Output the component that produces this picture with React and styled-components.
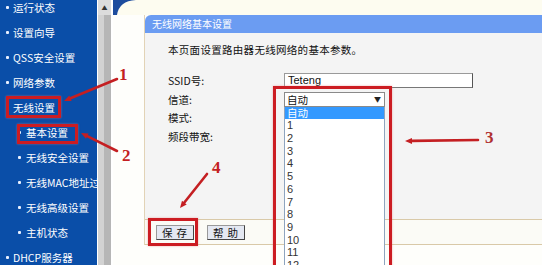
import React from "react";
import styled, { createGlobalStyle } from "styled-components";

const Global = createGlobalStyle`
  html, body { margin: 0; padding: 0; background: #ffffff; overflow: hidden; }
  body { font-family: "Noto Sans CJK SC", "DejaVu Sans", sans-serif; }
`;

const Page = styled.div`
  position: relative;
  width: 542px;
  height: 265px;
  display: flex;
  overflow: hidden;
  background: #fefefb;
`;

const Sidebar = styled.nav`
  width: 97px;
  flex: none;
  background: #0a4ea8;
  overflow: hidden;
`;

const MenuList = styled.ul`
  list-style: none;
  margin: -5px 0 0 0;
  padding: 0;
`;

const MenuItem = styled.li`
  height: 25px;
  display: flex;
  align-items: center;
  gap: ${(p) => (p.$sub ? "5px" : "4px")};
  padding-left: ${(p) => (p.$sub ? "18px" : "6px")};
  color: #ffffff;
  font-size: 10.5px;
  white-space: nowrap;
  &::before {
    content: "";
    width: 3px;
    height: 3px;
    border-radius: 1px;
    background: #e8f0ff;
    flex: none;
  }
`;

const Scrollbar = styled.div`
  width: 13px;
  flex: none;
  border-left: 1px solid #ffffff;
  border-right: 2px solid #ffffff;
  background: linear-gradient(90deg, #d2d2d2 0 45%, #b6b6b6 45% 100%);
  display: flex;
  flex-direction: column;
`;

const ScrollBtn = styled.div`
  height: 15px;
  background: #dcdcdc;
  color: #333;
  font-size: 6px;
  display: flex;
  justify-content: center;
  padding-top: 3px;
  box-sizing: border-box;
`;

const Main = styled.main`
  flex: 1;
  display: flex;
  flex-direction: column;
`;

const TopStrip = styled.div`
  height: 15px;
  display: flex;
  background: #fdfcf0;
`;

const Corner = styled.svg`
  display: block;
`;

const Panel = styled.section`
  margin-left: 31px;
  border-left: 1px solid #e2d3b6;
  display: flex;
  flex-direction: column;
`;

const TitleBar = styled.header`
  height: 18px;
  line-height: 18px;
  background: #6b9cf2;
  border-top-left-radius: 6px;
  color: #ffffff;
  font-size: 10px;
  padding-left: 7px;
`;

const Body = styled.div`
  height: 186px;
  box-sizing: border-box;
  background: #f4f4f4;
  padding: 10px 0 0 23px;
  color: #111;
  font-size: 10.5px;
`;

const Intro = styled.p`
  margin: 0;
  line-height: 14px;
  letter-spacing: 0.3px;
`;

const Form = styled.div`
  margin-top: 16px;
  display: grid;
  grid-template-columns: 116px auto;
  grid-auto-rows: 15px;
  row-gap: 3.7px;
  align-items: center;
`;

const Label = styled.span`
  line-height: 15px;
`;

const TextInput = styled.div`
  width: 189px;
  height: 15px;
  box-sizing: border-box;
  background: #ffffff;
  border: 1px solid #9a9a9a;
  border-right-color: #555;
  border-bottom-color: #777;
  font-family: "Liberation Sans", sans-serif;
  font-size: 11px;
  line-height: 13px;
  padding-left: 3px;
`;

const SelectWrap = styled.div`
  position: relative;
  width: 101px;
  height: 15px;
`;

const SelectBox = styled.div`
  height: 15px;
  box-sizing: border-box;
  background: #ffffff;
  border: 1px solid #8a8a8a;
  display: flex;
  justify-content: space-between;
  align-items: center;
  padding: 0 3px 0 2px;
  font-size: 10.5px;
`;

const Caret = styled.span`
  font-size: 7px;
  color: #222;
`;

const DropList = styled.ul`
  position: absolute;
  top: 15px;
  left: 0;
  width: 101px;
  box-sizing: border-box;
  margin: 0;
  padding: 0;
  list-style: none;
  background: #ffffff;
  border: 1px solid #8ea4bf;
  border-top: none;
  z-index: 2;
`;

const DropItem = styled.li`
  height: 12.7px;
  line-height: 12.7px;
  padding-left: 2px;
  font-family: ${(p) => (p.$num ? '"Liberation Sans", sans-serif' : "inherit")};
  font-size: ${(p) => (p.$num ? "11px" : "10.5px")};
  background: ${(p) => (p.$active ? "#3399ff" : "transparent")};
  color: ${(p) => (p.$active ? "#ffffff" : "#333")};
`;

const ButtonRow = styled.div`
  height: 24px;
  border-top: 1px solid #d9c9a8;
  border-bottom: 1px solid #d9c9a8;
  background: #fbfbf6;
  display: flex;
  align-items: center;
  gap: 13px;
  padding-left: 11px;
`;

const Button = styled.button`
  height: 15px;
  padding: 0 2px 0 5px;
  margin: 0;
  border: 1px solid #444;
  border-top-color: #999;
  border-left-color: #999;
  background: #e4e8f2;
  font-family: "Noto Sans CJK SC", sans-serif;
  font-size: 10.5px;
  line-height: 13px;
  letter-spacing: 4px;
  white-space: nowrap;
  color: #111;
`;

const Box = styled.div`
  position: absolute;
  left: ${(p) => p.$x}px;
  top: ${(p) => p.$y}px;
  width: ${(p) => p.$w}px;
  height: ${(p) => p.$h}px;
  box-sizing: border-box;
  border: 3px solid #cc1c22;
  box-shadow: 0 0 2px rgba(230, 120, 120, 0.6);
  z-index: 5;
`;

const Num = styled.span`
  position: absolute;
  left: ${(p) => p.$x}px;
  top: ${(p) => p.$y}px;
  font-family: "Liberation Serif", serif;
  font-size: 17px;
  font-weight: bold;
  line-height: 1;
  color: ${(p) => p.$c || "#c41f22"};
  z-index: 6;
`;

const Arrows = styled.svg`
  position: absolute;
  left: 0;
  top: 0;
  z-index: 6;
  pointer-events: none;
`;

const menu = [
  ["运行状态", false],
  ["设置向导", false],
  ["QSS安全设置", false],
  ["网络参数", false],
  ["无线设置", false],
  ["基本设置", true],
  ["无线安全设置", true],
  ["无线MAC地址过滤", true],
  ["无线高级设置", true],
  ["主机状态", true],
  ["DHCP服务器", false],
];

const channels = ["1", "2", "3", "4", "5", "6", "7", "8", "9", "10", "11", "12", "13"];

function Arrow({ x1, y1, x2, y2 }) {
  const a = Math.atan2(y2 - y1, x2 - x1);
  const L = 7;
  const W = 3;
  const bx = x2 - L * Math.cos(a);
  const by = y2 - L * Math.sin(a);
  const px = -Math.sin(a) * W;
  const py = Math.cos(a) * W;
  return (
    <g>
      <line x1={x1} y1={y1} x2={bx} y2={by} stroke="#c41f22" strokeWidth="2.6" strokeLinecap="round" />
      <polygon points={`${x2},${y2} ${bx + px},${by + py} ${bx - px},${by - py}`} fill="#c41f22" />
    </g>
  );
}

export default function App() {
  return (
    <>
      <Global />
      <Page>
        <Sidebar>
          <MenuList>
            {menu.map(([t, sub]) => (
              <MenuItem key={t} $sub={sub}>{t}</MenuItem>
            ))}
          </MenuList>
        </Sidebar>
        <Scrollbar>
          <ScrollBtn>▲</ScrollBtn>
        </Scrollbar>
        <Main>
          <TopStrip>
            <Corner width="24" height="15" viewBox="0 0 24 15">
              <path d="M0 0 H23 Q6 1 4 15 H0 Z" fill="#1d4c9e" />
            </Corner>
          </TopStrip>
          <Panel>
            <TitleBar>无线网络基本设置</TitleBar>
            <Body>
              <Intro>本页面设置路由器无线网络的基本参数。</Intro>
              <Form>
                <Label>SSID号:</Label>
                <TextInput>Teteng</TextInput>
                <Label>信道:</Label>
                <SelectWrap>
                  <SelectBox>
                    <span>自动</span>
                    <Caret>▼</Caret>
                  </SelectBox>
                  <DropList>
                    <DropItem $active>自动</DropItem>
                    {channels.map((c) => (
                      <DropItem key={c} $num>{c}</DropItem>
                    ))}
                  </DropList>
                </SelectWrap>
                <Label>模式:</Label>
                <span />
                <Label>频段带宽:</Label>
                <span />
              </Form>
            </Body>
            <ButtonRow>
              <Button>保存</Button>
              <Button>帮助</Button>
            </ButtonRow>
          </Panel>
        </Main>

        <Box $x={6} $y={96} $w={55} $h={22} />
        <Box $x={17} $y={124} $w={61} $h={20} />
        <Box $x={273} $y={86} $w={119} $h={200} />
        <Box $x={148} $y={218} $w={50} $h={28} />

        <Num $x={119} $y={66}>1</Num>
        <Num $x={122} $y={147}>2</Num>
        <Num $x={485} $y={129} $c="#b03030">3</Num>
        <Num $x={212} $y={159}>4</Num>

        <Arrows width="542" height="265" viewBox="0 0 542 265">
          <Arrow x1={117} y1={79} x2={64} y2={101} />
          <Arrow x1={117} y1={151} x2={81} y2={133} />
          <Arrow x1={478} y1={140} x2={405} y2={141} />
          <Arrow x1={207} y1={174} x2={180} y2={208} />
        </Arrows>
      </Page>
    </>
  );
}
